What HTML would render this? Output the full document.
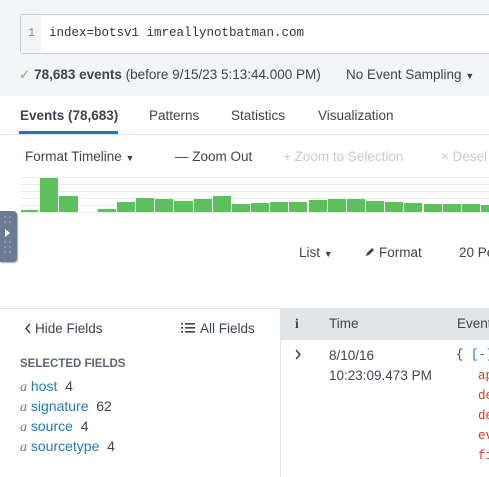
<!DOCTYPE html><html><head><style>
*{margin:0;padding:0;box-sizing:border-box}
html,body{width:489px;height:477px;overflow:hidden}
body{background:#fff;font-family:"Liberation Sans",sans-serif;font-size:13.5px;color:#3c444d;position:relative}
.a{position:absolute;white-space:nowrap}
.bar{position:absolute;background:#5cc05c;bottom:265px}
.g{position:absolute;left:20px;width:469px;height:1px;background:#e8eaec}
.mono{font-family:"Liberation Mono",monospace}
.c{font-size:9px}
.f{position:absolute;left:20px;white-space:nowrap;font-size:14px;line-height:16px;height:16px}
.f i{font-family:'Liberation Serif',serif;color:#777}
.f span{color:#1a7bbd}
</style></head><body>
<div class="a" style="left:0;top:0;width:489px;height:96px;background:#f2f4f5"></div>
<div class="a" style="left:20px;top:14px;width:469px;height:40px;background:#fff;border:1px solid #c3cbd4;border-right:none;border-radius:3px 0 0 3px"></div>
<div class="a" style="left:21px;top:15px;width:20px;height:38px;background:#f2f4f5"></div>
<div class="a mono" style="left:28px;top:26px;font-size:12px;color:#888">1</div>
<div class="a mono" style="left:49px;top:26px;font-size:12.5px;color:#333">index=botsv1 imreallynotbatman.com</div>
<div class="a" style="left:19px;top:67px;font-size:13.5px;color:#3c444d"><span style="color:#5cc05c">✓</span> <b>78,683 events</b> (before 9/15/23 5:13:44.000 PM)</div>
<div class="a" style="left:346px;top:67px">No Event Sampling <span class="c">▼</span></div>
<div class="a" style="left:20px;top:108px;font-weight:bold;color:#3c444d">Events (78,683)</div>
<div class="a" style="left:149px;top:108px">Patterns</div>
<div class="a" style="left:231px;top:108px">Statistics</div>
<div class="a" style="left:318px;top:108px">Visualization</div>
<div class="a" style="left:19px;top:131px;width:99px;height:3px;background:#1a7bbd"></div>
<div class="a" style="left:0;top:134px;width:489px;height:1px;background:#dfe3e6"></div>
<div class="a" style="left:25px;top:149px">Format Timeline <span class="c">▼</span></div>
<div class="a" style="left:175px;top:149px">— Zoom Out</div>
<div class="a" style="left:283px;top:149px;color:#c3cbd4">+ Zoom to Selection</div>
<div class="a" style="left:441px;top:149px;color:#c3cbd4">× Desel</div>
<div class="g" style="top:177px"></div><div class="g" style="top:184px"></div><div class="g" style="top:191px"></div><div class="g" style="top:198px"></div><div class="g" style="top:205px"></div><div class="g" style="top:212px"></div>
<div class="bar" style="left:21px;width:17px;height:2px"></div>
<div class="bar" style="left:40px;width:18px;height:34px"></div>
<div class="bar" style="left:59px;width:19px;height:16px"></div>
<div class="bar" style="left:98px;width:18px;height:3px"></div>
<div class="bar" style="left:117px;width:18px;height:10px"></div>
<div class="bar" style="left:136px;width:18px;height:14px"></div>
<div class="bar" style="left:155px;width:18px;height:13px"></div>
<div class="bar" style="left:174px;width:19px;height:11px"></div>
<div class="bar" style="left:194px;width:18px;height:13px"></div>
<div class="bar" style="left:213px;width:18px;height:16px"></div>
<div class="bar" style="left:232px;width:18px;height:8px"></div>
<div class="bar" style="left:251px;width:18px;height:9px"></div>
<div class="bar" style="left:270px;width:18px;height:10px"></div>
<div class="bar" style="left:289px;width:18px;height:10px"></div>
<div class="bar" style="left:309px;width:18px;height:12px"></div>
<div class="bar" style="left:328px;width:18px;height:13px"></div>
<div class="bar" style="left:347px;width:18px;height:13px"></div>
<div class="bar" style="left:366px;width:18px;height:11px"></div>
<div class="bar" style="left:385px;width:18px;height:10px"></div>
<div class="bar" style="left:404px;width:18px;height:9px"></div>
<div class="bar" style="left:424px;width:18px;height:8px"></div>
<div class="bar" style="left:443px;width:18px;height:8px"></div>
<div class="bar" style="left:462px;width:18px;height:8px"></div>
<div class="bar" style="left:481px;width:8px;height:7px"></div>
<div class="a" style="left:0;top:211px;width:17px;height:51px;background:#6c7a93;border-radius:0 4px 4px 0;box-shadow:1px 1px 1px #aab"></div>
<div class="a" style="left:5px;top:229px;width:0;height:0;border-left:5px solid #fff;border-top:4px solid transparent;border-bottom:4px solid transparent"></div>
<svg class="a" style="left:0;top:211px" width="17" height="51"><g fill="#8f9bb0"><rect x="4" y="5" width="2" height="2"/><rect x="9" y="5" width="2" height="2"/><rect x="4" y="10" width="2" height="2"/><rect x="9" y="10" width="2" height="2"/><rect x="4" y="30" width="2" height="2"/><rect x="9" y="30" width="2" height="2"/><rect x="4" y="35" width="2" height="2"/><rect x="9" y="35" width="2" height="2"/><rect x="4" y="40" width="2" height="2"/><rect x="9" y="40" width="2" height="2"/></g></svg>
<div class="a" style="left:299px;top:245px">List <span class="c">▼</span></div>
<svg class="a" style="left:365px;top:247px" width="10" height="10"><path d="M1 9 L2 6 L7 1 L9 3 L4 8 Z" fill="#3c444d"/></svg>
<div class="a" style="left:379px;top:245px">Format</div>
<div class="a" style="left:459px;top:245px">20 Per Page</div>
<div class="a" style="left:0;top:308px;width:489px;height:1px;background:#dfe3e6"></div>
<div class="a" style="left:281px;top:309px;width:208px;height:31px;background:#e1e5e8"></div>
<div class="a" style="left:280px;top:309px;width:1px;height:168px;background:#dfe3e6"></div>
<svg class="a" style="left:24px;top:323px" width="8" height="11"><path d="M6 1 L2 5.5 L6 10" stroke="#3c444d" stroke-width="1.5" fill="none"/></svg>
<div class="a" style="left:35px;top:321px">Hide Fields</div>
<svg class="a" style="left:181px;top:322px" width="14" height="11"><g fill="#3c444d"><rect x="0" y="1" width="2" height="1.6"/><rect x="4" y="1" width="10" height="1.6"/><rect x="0" y="5" width="2" height="1.6"/><rect x="4" y="5" width="10" height="1.6"/><rect x="0" y="9" width="2" height="1.6"/><rect x="4" y="9" width="10" height="1.6"/></g></svg>
<div class="a" style="left:200px;top:321px">All Fields</div>
<div class="a" style="left:295px;top:316px;font-family:'Liberation Serif',serif;font-weight:bold">i</div>
<div class="a" style="left:329px;top:316px">Time</div>
<div class="a" style="left:457px;top:316px">Event</div>
<svg class="a" style="left:294px;top:349px" width="8" height="11"><path d="M2 1 L6 5.5 L2 10" stroke="#3c444d" stroke-width="1.5" fill="none"/></svg>
<div class="a" style="left:329px;top:348px">8/10/16</div>
<div class="a" style="left:329px;top:368px">10:23:09.473 PM</div>
<div class="a mono" style="left:456px;top:348px;font-size:12.5px;color:#1a7bbd"><span style="color:#3c444d">{</span> [-]</div>
<div class="a mono" style="left:478px;top:366px;font-size:12.5px;color:#d6391e;line-height:20px">ap<br>de<br>de<br>ev<br>fi</div>
<div class="a" style="left:20px;top:358px;font-size:11.5px;font-weight:bold;color:#5c6773">SELECTED FIELDS</div>
<div class="f" style="top:378px"><i>a</i> <span>host</span>&nbsp; 4</div>
<div class="f" style="top:398px"><i>a</i> <span>signature</span>&nbsp; 62</div>
<div class="f" style="top:418px"><i>a</i> <span>source</span>&nbsp; 4</div>
<div class="f" style="top:438px"><i>a</i> <span>sourcetype</span>&nbsp; 4</div>
</body></html>
